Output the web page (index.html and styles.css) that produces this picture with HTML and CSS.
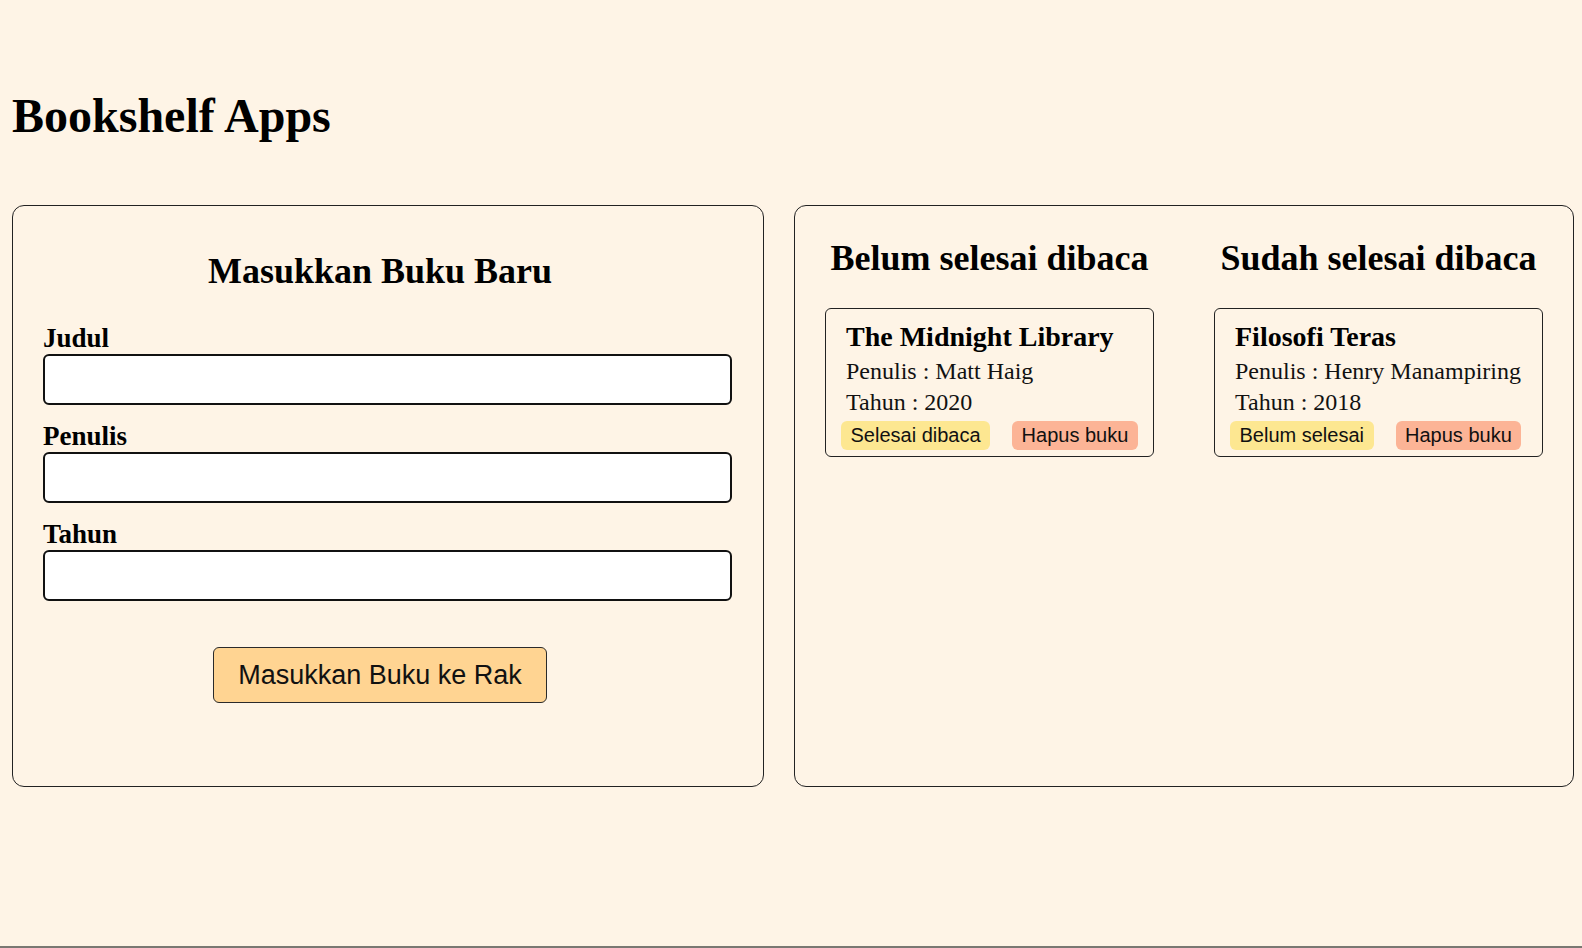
FILE: index.html
```html
<!DOCTYPE html>
<html lang="id">
<head>
<meta charset="utf-8">
<title>Bookshelf Apps</title>
<link rel="stylesheet" href="styles.css">
</head>
<body>
<header class="app-header">
  <h1 class="app-title">Bookshelf Apps</h1>
</header>
<main class="shelf-layout">
  <section class="panel panel-form">
    <h2 class="panel-heading">Masukkan Buku Baru</h2>
    <form class="book-form">
      <div class="field">
        <label class="field-label" for="inputJudul">Judul</label>
        <input class="field-input" id="inputJudul" type="text">
      </div>
      <div class="field">
        <label class="field-label" for="inputPenulis">Penulis</label>
        <input class="field-input" id="inputPenulis" type="text">
      </div>
      <div class="field">
        <label class="field-label" for="inputTahun">Tahun</label>
        <input class="field-input" id="inputTahun" type="text">
      </div>
      <div class="form-actions">
        <button class="submit-btn" type="button">Masukkan Buku ke Rak</button>
      </div>
    </form>
  </section>
  <section class="panel panel-shelves">
    <div class="shelf">
      <h2 class="shelf-heading">Belum selesai dibaca</h2>
      <article class="book-card">
        <h3 class="book-title">The Midnight Library</h3>
        <p class="book-info">Penulis : Matt Haig</p>
        <p class="book-info">Tahun : 2020</p>
        <div class="book-actions">
          <button class="pill pill-toggle" type="button">Selesai dibaca</button>
          <button class="pill pill-delete" type="button">Hapus buku</button>
        </div>
      </article>
    </div>
    <div class="shelf">
      <h2 class="shelf-heading">Sudah selesai dibaca</h2>
      <article class="book-card">
        <h3 class="book-title">Filosofi Teras</h3>
        <p class="book-info">Penulis : Henry Manampiring</p>
        <p class="book-info">Tahun : 2018</p>
        <div class="book-actions">
          <button class="pill pill-toggle" type="button">Belum selesai</button>
          <button class="pill pill-delete" type="button">Hapus buku</button>
        </div>
      </article>
    </div>
  </section>
</main>
<footer class="page-footer"></footer>
</body>
</html>
```

FILE: styles.css
```css
html, body {
  margin: 0;
  padding: 0;
}

body {
  background: #fef4e6;
  color: #000;
  font-family: "Liberation Serif", "Times New Roman", serif;
}

.app-header {
  padding: 88px 0 0 12px;
}

.app-title {
  margin: 0;
  font-size: 48px;
  line-height: 56px;
  font-weight: bold;
}

.shelf-layout {
  display: flex;
  align-items: stretch;
  gap: 30px;
  padding: 0 8px 0 12px;
  margin-top: 61px;
}

.panel {
  box-sizing: border-box;
  border: 1px solid #222;
  border-radius: 12px;
}

.panel-form {
  flex: 0 0 752px;
  padding: 44px 46px 83px 30px;
}

.panel-heading,
.shelf-heading {
  margin: 0;
  font-size: 36px;
  line-height: 42px;
  font-weight: bold;
  text-align: center;
}

.book-form {
  margin-top: 30px;
}

.field {
  margin-bottom: 15px;
}

.field-label {
  display: block;
  font-size: 27px;
  line-height: 32px;
  font-weight: bold;
}

.field-input {
  display: block;
  width: 100%;
  height: 47px;
  padding: 0 5.5px;
  margin: 0;
  border: 2px solid #111;
  border-radius: 6px;
  background: #fff;
  font-size: 20px;
}

.form-actions {
  display: flex;
  justify-content: center;
  margin-top: 46px;
}

.submit-btn {
  box-sizing: border-box;
  height: 56px;
  padding: 0 24px;
  border: 1px solid #2a2a2a;
  border-radius: 6px;
  background: #ffd492;
  color: #111;
  font-family: "Liberation Sans", Arial, sans-serif;
  font-size: 27px;
  line-height: 31px;
}

.panel-shelves {
  flex: 1 1 auto;
  padding-top: 31px;
  display: grid;
  grid-template-columns: 1fr 1fr;
  align-content: start;
}

.shelf {
  padding: 0 30px;
}

.book-card {
  margin-top: 29px;
  padding: 12px 15px 6px;
  border: 1px solid #222;
  border-radius: 6px;
}

.book-title {
  margin: 0 0 3px 5px;
  font-size: 28px;
  line-height: 32px;
  font-weight: bold;
}

.book-info {
  margin: 0 0 0 5px;
  font-size: 24px;
  line-height: 31px;
  color: #111;
}

.book-actions {
  display: flex;
  gap: 22px;
  margin-top: 3px;
}

.pill {
  padding: 3px 9.5px;
  border: none;
  border-radius: 6px;
  color: #111;
  font-family: "Liberation Sans", Arial, sans-serif;
  font-size: 20px;
  line-height: 23px;
}

.pill-toggle {
  background: #fde791;
}

.pill-delete {
  background: #fcb496;
}

.page-footer {
  margin-top: 159px;
  height: 2px;
  background: #7a7872;
}
```
